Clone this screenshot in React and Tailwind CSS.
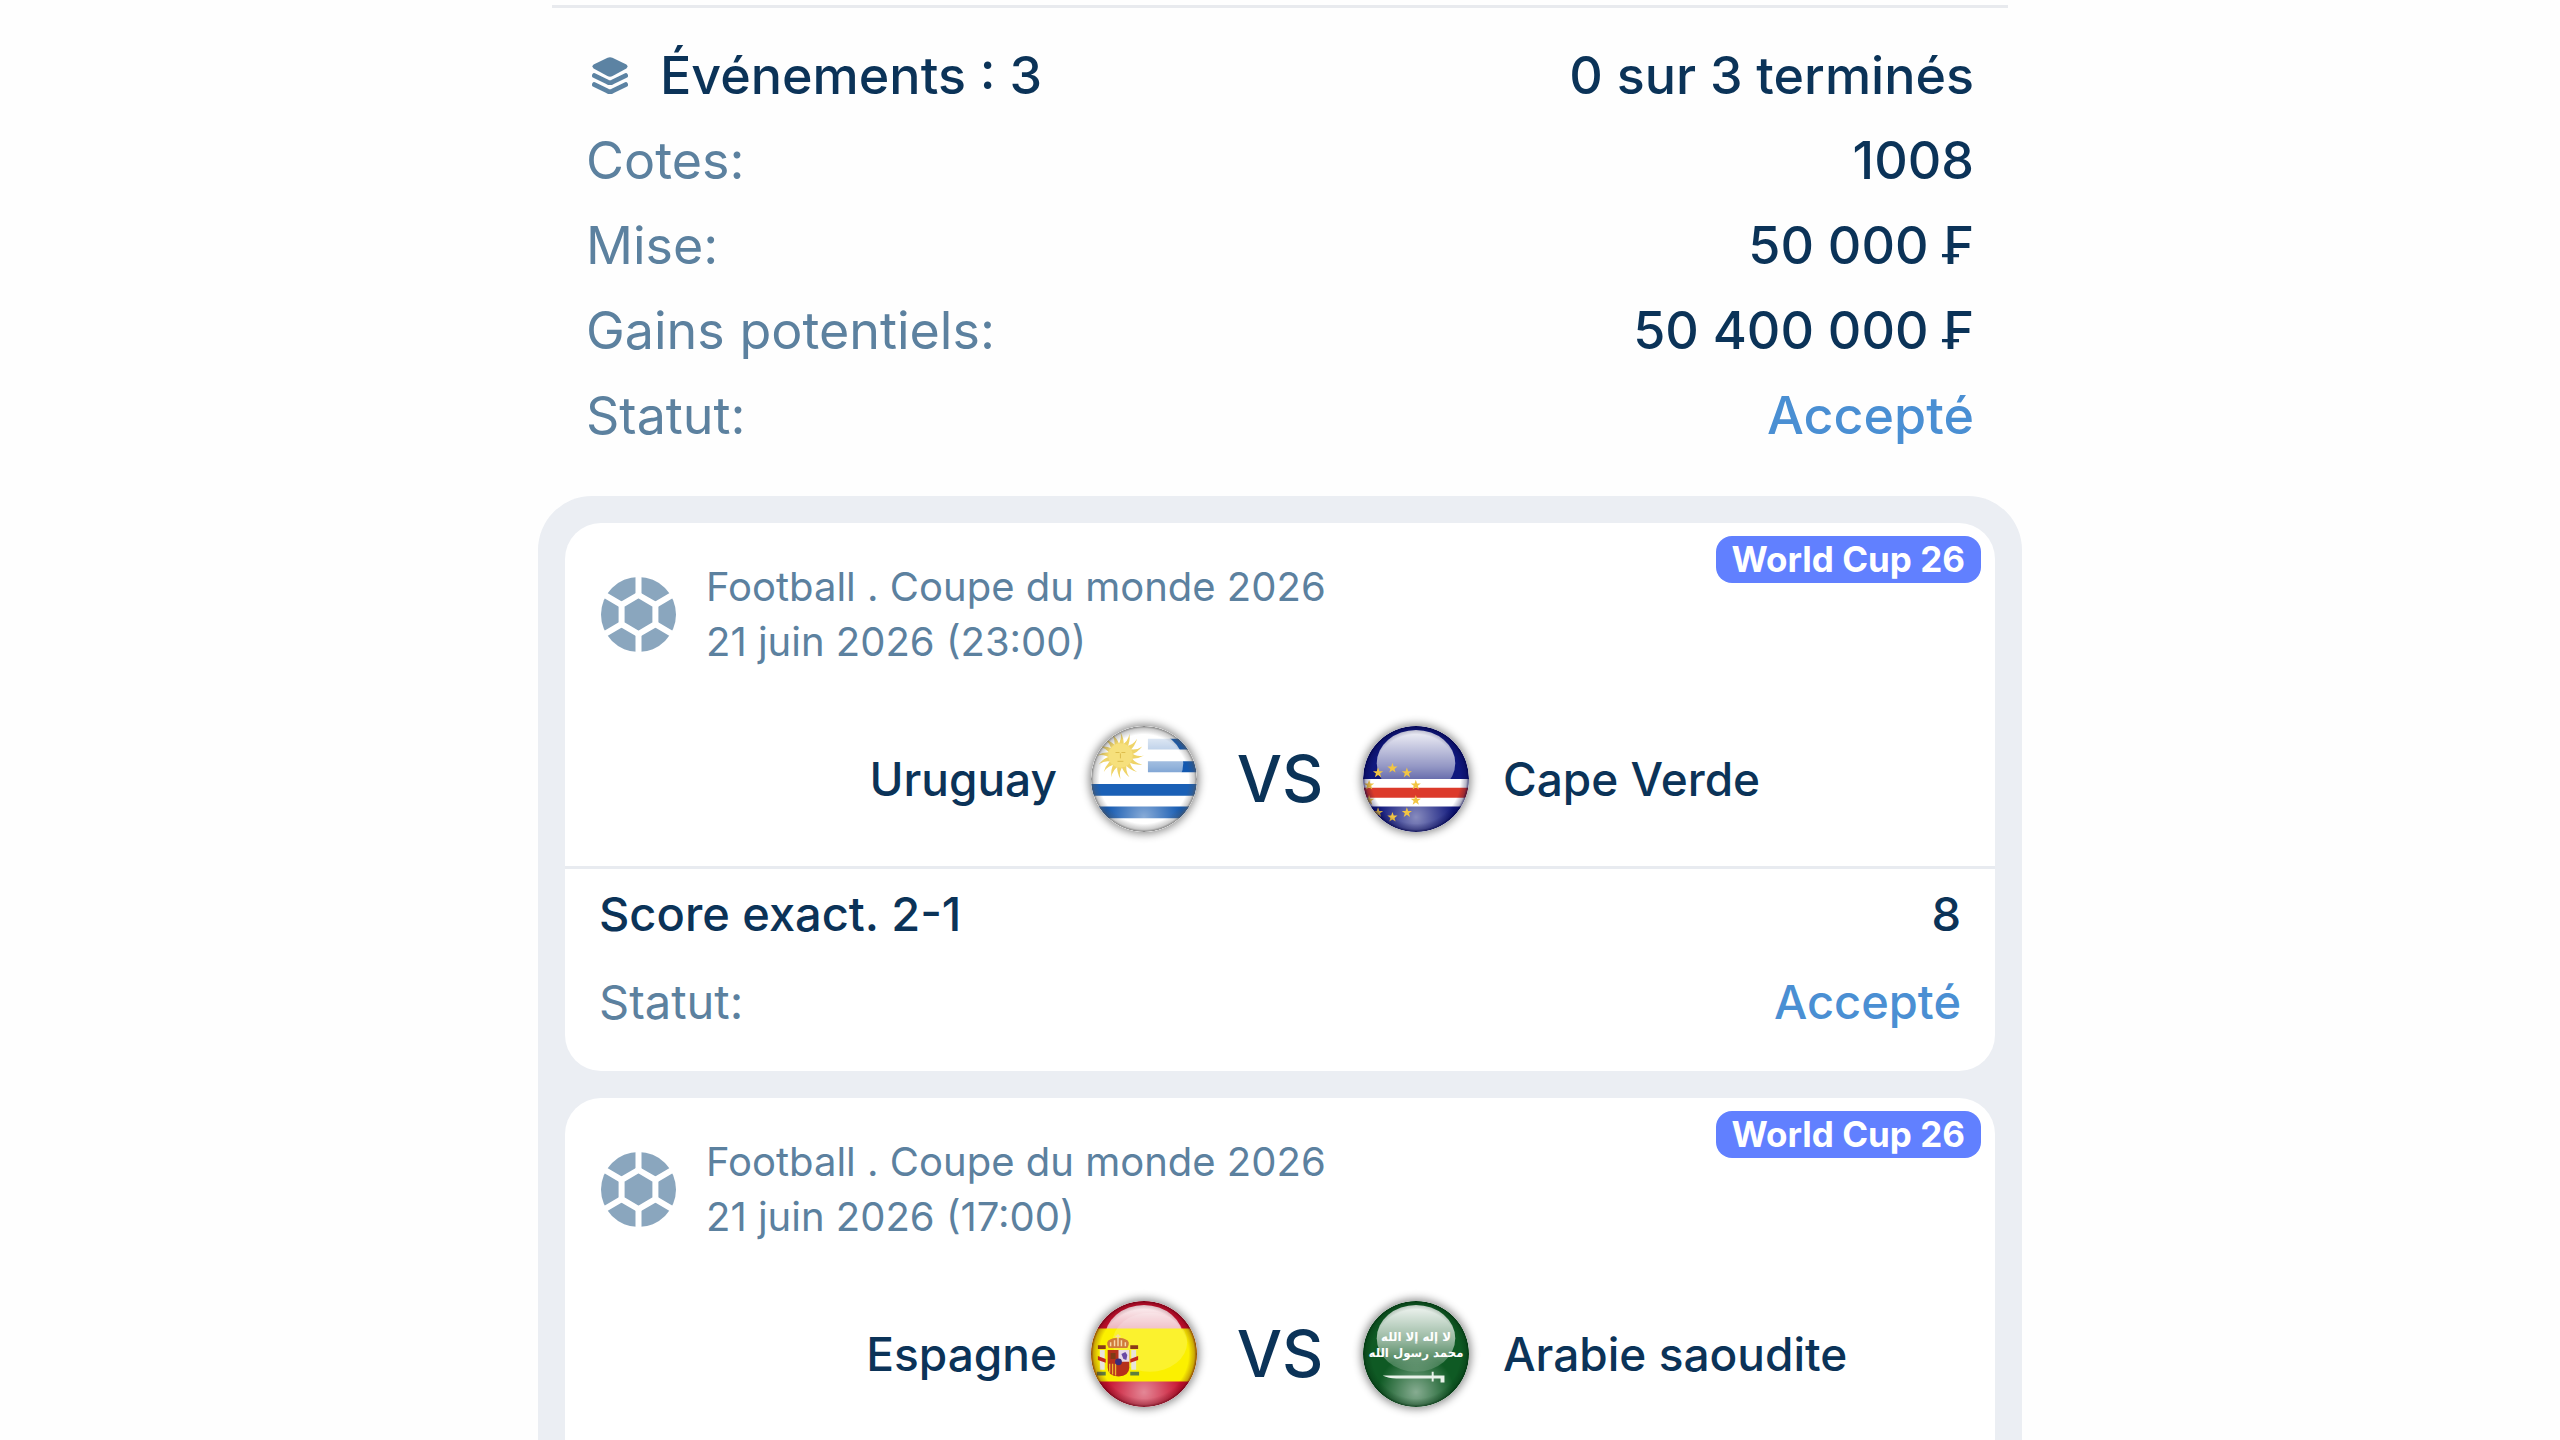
import React from 'react';

const summary = [
  { label: 'Cotes:', value: '1008' },
  { label: 'Mise:', value: '50 000 ₣' },
  { label: 'Gains potentiels:', value: '50 400 000 ₣' },
];

const events = [
  {
    league: 'Football . Coupe du monde 2026',
    date: '21 juin 2026 (23:00)',
    home: 'Uruguay',
    away: 'Cape Verde',
    homeFlag: UruguayFlag,
    awayFlag: CapeVerdeFlag,
    bet: { label: 'Score exact. 2-1', odds: '8', status: 'Accepté' },
  },
  {
    league: 'Football . Coupe du monde 2026',
    date: '21 juin 2026 (17:00)',
    home: 'Espagne',
    away: 'Arabie saoudite',
    homeFlag: SpainFlag,
    awayFlag: SaudiFlag,
  },
];

function LayersIcon() {
  return (
    <svg viewBox="0 0 36 38" className="h-[38px] w-9 shrink-0 text-[#5c83a3]" fill="none">
      <path
        d="M15.6 .8Q18-.3 20.4.8L34.4 7.4Q36.6 9.2 34.4 11.4L20.6 19Q18 20.4 15.4 19L1.6 11.4Q-.6 9.2 1.6 7.4Z"
        fill="currentColor"
      />
      <path
        d="M2.4 18.6 15.8 25.2Q18 26.2 20.2 25.2L33.6 18.6M2.4 27.6 15.8 34.2Q18 35.2 20.2 34.2L33.6 27.6"
        stroke="currentColor"
        strokeWidth="4.8"
        strokeLinecap="round"
      />
    </svg>
  );
}

function BallIcon() {
  return (
    <svg viewBox="0 0 75 75" className="size-[75px] shrink-0">
      <circle cx="37.5" cy="37.5" r="37.5" fill="#8aa6be" />
      <g fill="none" stroke="#fff" strokeWidth="6">
        <path d="M37.5 18 54.4 27.8V47.2L37.5 57 20.6 47.2V27.8Z" />
        <path d="M37.5 18V-2M54.4 27.8 74 16.4M54.4 47.2 74 58.6M37.5 57V77M20.6 47.2 1 58.6M20.6 27.8 1 16.4" />
      </g>
    </svg>
  );
}

// Round glossy badge, the flag itself is passed as children
function Flag({ id, title, edge, children }) {
  return (
    <svg
      viewBox="0 0 108 108"
      role="img"
      aria-label={title}
      className="size-[106px] rounded-full shadow-[0_0_8px_2px_rgba(0,0,0,0.45)]"
    >
      <defs>
        <clipPath id={`${id}-clip`}>
          <circle cx="54" cy="54" r="54" />
        </clipPath>
        <linearGradient id={`${id}-top`} x1="0" y1="0" x2="0" y2="1">
          <stop offset="0" stopColor="#fff" stopOpacity="0.95" />
          <stop offset="0.55" stopColor="#fff" stopOpacity="0.55" />
          <stop offset="1" stopColor="#fff" stopOpacity="0.12" />
        </linearGradient>
        <radialGradient id={`${id}-bottom`} cx="0.5" cy="0.86" r="0.36">
          <stop offset="0" stopColor="#fff" stopOpacity="0.5" />
          <stop offset="1" stopColor="#fff" stopOpacity="0" />
        </radialGradient>
        <radialGradient id={`${id}-edge`}>
          <stop offset="0.84" stopColor={edge} stopOpacity="0" />
          <stop offset="0.95" stopColor={edge} stopOpacity="0.3" />
          <stop offset="1" stopColor={edge} stopOpacity="0.75" />
        </radialGradient>
      </defs>
      <g clipPath={`url(#${id}-clip)`}>
        {children(
          <>
            <ellipse cx="54" cy="38" rx="40" ry="34" fill={`url(#${id}-top)`} />
            <rect width="108" height="108" fill={`url(#${id}-bottom)`} />
          </>
        )}
        <circle cx="54" cy="54" r="54" fill={`url(#${id}-edge)`} />
      </g>
    </svg>
  );
}

function UruguayFlag() {
  const rays = Array.from({ length: 16 }, (_, i) => i * 22.5);
  return (
    <Flag id="uy" title="Uruguay" edge="#555">
      {(gloss) => (
        <>
          <rect width="108" height="108" fill="#fff" />
          <path d="M58 13H108V24H58ZM58 36H108V47H58ZM0 82H108V94H0Z" fill="#1258b0" />
          {gloss}
          <path d="M0 59H108V71H0Z" fill="#1a60b6" />
          <g transform="translate(30 30)" fill="#efd468">
            {rays.map((a) => (
              <path key={a} d="M-3.2-10Q2-16 0-24Q4-17 3.2-10Z" transform={`rotate(${a})`} />
            ))}
            <circle r="12.5" fill="#f6e07c" />
            <path d="M-5-3H-1M1-3H5M0-2V3M-3 6H3" stroke="#dcbc4c" fill="none" />
          </g>
        </>
      )}
    </Flag>
  );
}

function CapeVerdeFlag() {
  const stars = Array.from({ length: 10 }, (_, i) => i * 36);
  return (
    <Flag id="cv" title="Cape Verde" edge="#000040">
      {(gloss) => (
        <>
          <rect width="108" height="108" fill="#10187d" />
          {gloss}
          <path d="M0 54H108V82H0Z" fill="#fff" />
          <path d="M0 63H108V73H0Z" fill="#dc3a2b" />
          {stars.map((a) => (
            <path
              key={a}
              transform={`translate(30 68) rotate(${a}) translate(0 -25) rotate(${-a})`}
              d="M0-5.5 1.3-1.7H5.2L2.1.7 3.2 4.4 0 2.2-3.2 4.4-2.1.7-5.2-1.7H-1.3Z"
              fill="#f2c543"
            />
          ))}
        </>
      )}
    </Flag>
  );
}

function SpainFlag() {
  return (
    <Flag id="es" title="Espagne" edge="#5a0010">
      {(gloss) => (
        <>
          <rect width="108" height="108" fill="#c8102e" />
          {gloss}
          <path d="M0 28H108V82H0Z" fill="#fbf000" />
          <ellipse cx="60" cy="42" rx="38" ry="30" fill="#fff" opacity="0.18" />
          {/* pillars */}
          <path d="M9 50h5v20H9ZM41 50h5v20h-5Z" fill="#e8e4da" />
          <path d="M6 72h9v4H6ZM40 72h9v4h-9Z" fill="#5f7f3f" />
          <path d="M7 45h8v4H7ZM40 45h8v4h-8Z" fill="#8a3a18" />
          <path d="M7 56l8 3v4l-8-3ZM48 56l-8 3v4l8-3Z" fill="#c4281e" />
          {/* crown */}
          <path d="M18 48Q14 41 20 39Q24 37 27.5 38Q31 37 35 39Q41 41 37 48Z" fill="#cf7a3a" />
          <path d="M20 46V42M24 46V40M27.5 46V34M31 46V40M35 46V42M25 36H30" stroke="#f6d9a8" strokeWidth="1.5" />
          {/* shield */}
          <path d="M17 50H39V68Q39 76 28 77Q17 76 17 68Z" fill="#b5301c" />
          <path d="M28 50H39V62H28Z" fill="#e9dbe8" />
          <path d="M31 54l4-2 2 3-1 5-3-1Z" fill="#6a4aa5" />
          <path d="M19 64V73M22 64V75M25 64V76" stroke="#eeb52d" strokeWidth="1.4" />
          <path d="M20 53h5v6h-5Z" fill="#7d3a14" />
          <circle cx="28" cy="62" r="3.5" fill="#3b2b79" />
        </>
      )}
    </Flag>
  );
}

function SaudiFlag() {
  return (
    <Flag id="sa" title="Arabie saoudite" edge="#002a0c">
      {(gloss) => (
        <>
          <rect width="108" height="108" fill="#0f5a24" />
          {gloss}
          <g
            fill="#fff"
            fontFamily="'DejaVu Sans', sans-serif"
            fontWeight="bold"
            fontSize="12"
            textAnchor="middle"
          >
            <text x="54" y="41">لا إله إلا الله</text>
            <text x="54" y="57">محمد رسول الله</text>
          </g>
          <path d="M20 76H70V72H72V76H83V83H79V79H72V82H70V79H34Q26 79 20 76Z" fill="#e9f2ea" />
        </>
      )}
    </Flag>
  );
}

const Row = ({ label, value, valueClass = 'text-[#0b3358]' }) => (
  <div className="flex items-center justify-between">
    <dt className="text-[#5c819f]">{label}</dt>
    <dd className={`font-medium ${valueClass}`}>{value}</dd>
  </div>
);

const EventCard = ({ event, last }) => {
  const HomeFlag = event.homeFlag;
  const AwayFlag = event.awayFlag;

  return (
    <article className={`relative bg-white ${last ? 'flex-1 rounded-t-[36px]' : 'rounded-[36px] pb-[25px]'}`}>
      <span className="absolute right-[14px] top-[13px] flex h-[47px] items-center rounded-2xl bg-[#6180ff] px-4 text-[35px] font-bold text-white">
        World Cup 26
      </span>

      <header className="flex items-center gap-[30px] px-9 pt-9 text-[40px] leading-[55px] text-[#5c819f]">
        <BallIcon />
        <div>
          <p>{event.league}</p>
          <p>{event.date}</p>
        </div>
      </header>

      <div className="mt-[57px] mb-[34px] grid grid-cols-[1fr_auto_166px_auto_1fr] items-center text-[46px] font-medium text-[#0b3358]">
        <span className="pr-[34px] text-right">{event.home}</span>
        <HomeFlag />
        <span className="text-center text-[64px] leading-none">VS</span>
        <AwayFlag />
        <span className="pl-[34px]">{event.away}</span>
      </div>

      {event.bet && (
        <dl className="border-t-[3px] border-[#e8ebf0] px-[34px] pt-px text-[47px] leading-[88px]">
          <div className="flex items-center justify-between font-medium text-[#0b3358]">
            <dt>{event.bet.label}</dt>
            <dd>{event.bet.odds}</dd>
          </div>
          <Row label="Statut:" value={event.bet.status} valueClass="text-[#4a8fd3]" />
        </dl>
      )}
    </article>
  );
};

const App = () => {
  return (
    <main className="flex h-screen flex-col overflow-hidden bg-[#fefefe] pt-[5px] font-['Inter',sans-serif]">
      <div className="mx-auto flex w-full max-w-[1484px] flex-1 flex-col">
        <section className="mx-[14px] border-t-[3px] border-[#e8eaee] px-[34px] pt-[25px] text-[52px] leading-[85px]">
          <div className="flex items-center justify-between font-medium text-[#0b3358]">
            <h1 className="flex items-center gap-8 pl-[6px]">
              <LayersIcon />
              Événements : 3
            </h1>
            <p>0 sur 3 terminés</p>
          </div>
          <dl>
            {summary.map((item) => (
              <Row key={item.label} label={item.label} value={item.value} />
            ))}
            <Row label="Statut:" value="Accepté" valueClass="text-[#4a8fd3]" />
          </dl>
        </section>

        <section className="mt-[38px] flex flex-1 flex-col gap-[27px] rounded-t-[54px] bg-[#ebeef3] px-[27px] pt-[27px]">
          {events.map((event, i) => (
            <EventCard key={event.home} event={event} last={i === events.length - 1} />
          ))}
        </section>
      </div>
    </main>
  );
};

export default App;
